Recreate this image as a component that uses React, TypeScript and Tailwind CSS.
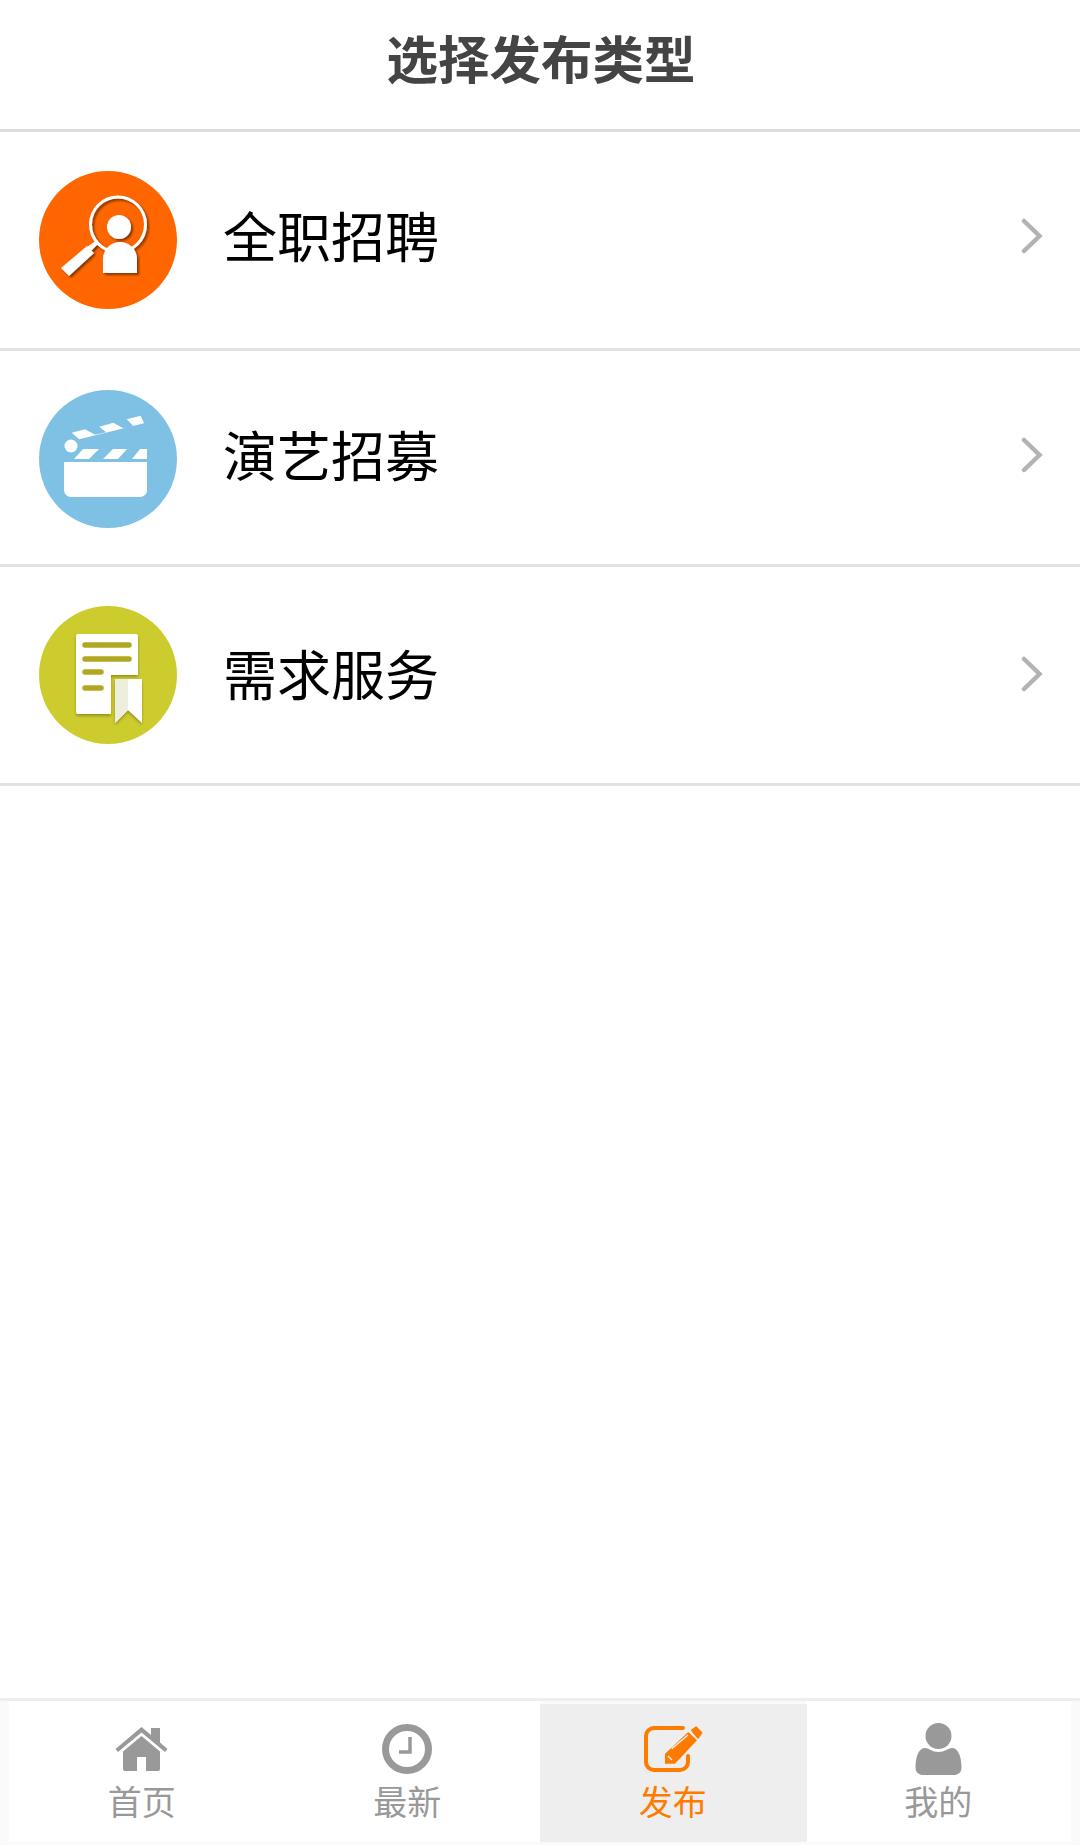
const rows = [
  { label: "全职招聘", icon: <SearchIcon />, rowClass: "h-[219px]", textClass: "pb-[11px]", arrowClass: "mb-[8px]" },
  { label: "演艺招募", icon: <ClapperIcon />, rowClass: "h-[216px]", textClass: "pb-[10px]", arrowClass: "mb-[8px]" },
  { label: "需求服务", icon: <DocIcon />, rowClass: "h-[219px]", textClass: "pb-[5px]", arrowClass: "mb-[2px]" },
];

const tabs = [
  { label: "首页", icon: <HomeIcon /> },
  { label: "最新", icon: <ClockIcon /> },
  { label: "发布", icon: <EditIcon />, active: true },
  { label: "我的", icon: <UserIcon /> },
];

function SearchIcon() {
  return (
    <svg viewBox="0 0 138 138" className="h-[138px] w-[138px]">
      <defs>
        <filter id="orangeShadow" x="-20%" y="-20%" width="140%" height="140%">
          <feDropShadow dx="2" dy="2" stdDeviation="1.200" floodColor="#7a3300" floodOpacity="0.9" />
        </filter>
      </defs>
      <circle cx="69" cy="69" r="69" fill="#ff6600" />
      <g filter="url(#orangeShadow)" fill="#fff">
        <circle cx="79" cy="53.500" r="27.500" fill="none" stroke="#fff" strokeWidth="3" />
        <circle cx="80" cy="56" r="12" />
        <path d="M22 97 48 75 55 82 30 105Z" />
        <path d="M48 76 58 69 60 72 52 80Z" />
        <path d="M64 102V88A17 17 0 0 1 98 88V102Z" />
      </g>
    </svg>
  );
}

function ClapperIcon() {
  return (
    <svg viewBox="0 0 138 138" className="h-[138px] w-[138px]">
      <circle cx="69" cy="69" r="69" fill="#7fc1e5" />
      <g fill="#fff">
        <path d="M25 72H108V100A7 7 0 0 1 101 107H32A7 7 0 0 1 25 100Z" />
        <path d="M35 69 44 59H60L50 69ZM64 69 74 59H88L79 69ZM93 69 101 59H108V69Z" />
        <circle cx="32" cy="56" r="6.500" />
        <path d="M32.700 42.700 46 39.300 56 44.700 67 42.300 60.300 36.700 74.300 32.700 84.300 38.300 94.300 36 87.700 29.300 101.700 25.700 105 33.300 40.300 49.300Z" />
      </g>
    </svg>
  );
}

function DocIcon() {
  return (
    <svg viewBox="0 0 138 138" className="h-[138px] w-[138px]">
      <defs>
        <filter id="oliveShadow" x="-20%" y="-20%" width="140%" height="140%">
          <feDropShadow dx="0" dy="2" stdDeviation="1.500" floodColor="#8f8a18" floodOpacity="0.9" />
        </filter>
      </defs>
      <circle cx="69" cy="69" r="69" fill="#cdcc2f" />
      <g filter="url(#oliveShadow)">
        <path d="M39 28H97A2 2 0 0 1 99 30V69H72V108H39A2 2 0 0 1 37 106V30A2 2 0 0 1 39 28Z" fill="#fff" />
        <path d="M76 73H103V117L89 104 76 117Z" fill="#fff" />
      </g>
      <path d="M76 73H89V104L76 117Z" fill="#eeeedd" />
      <g stroke="#b0a821" strokeWidth="5.500" strokeLinecap="round">
        <path d="M46 39H90M46 53H90M46 66H62M46 82H62" />
      </g>
    </svg>
  );
}

function HomeIcon() {
  return (
    <svg viewBox="0 0 53 44" className="h-[44px] w-[53px]" fill="#999">
      <path d="M26.500 0 36 8V1H45V15.500L52.500 22 50 25 26.500 5.500 3 25 .5 22Z" />
      <path d="M26.500 9 45 24.500V42A2 2 0 0 1 43 44H31V30H22V44H10A2 2 0 0 1 8 42V24.500Z" />
    </svg>
  );
}

function ClockIcon() {
  return (
    <svg viewBox="0 0 50 50" className="h-[50px] w-[50px]">
      <circle cx="25" cy="25" r="21.500" fill="none" stroke="#999" strokeWidth="7" />
      <path d="M28 13V28H17" fill="none" stroke="#999" strokeWidth="3.500" />
    </svg>
  );
}

function EditIcon() {
  return (
    <svg viewBox="0 0 60 48" className="h-[48px] w-[60px]">
      <path d="M40 3H11A8 8 0 0 0 3 11V37A8 8 0 0 0 11 45H37A8 8 0 0 0 45 37V31" fill="none" stroke="#ff7b00" strokeWidth="4" strokeLinecap="round" />
      <path d="M22 28.700 45.300 7 54 15.300 32 38.700H22Z" fill="#ff7b00" />
      <path d="M48.700 5.300 53 2 58.700 7.700 55 13Z" fill="#ff7b00" stroke="#ff7b00" strokeWidth="1.500" strokeLinejoin="round" />
      <path d="M28.700 23.700 45 10M25 31 29 35" fill="none" stroke="#eee" strokeWidth="1.500" />
    </svg>
  );
}

function UserIcon() {
  return (
    <svg viewBox="0 0 47 52" className="h-[52px] w-[47px]" fill="#999">
      <circle cx="23.500" cy="13" r="13" />
      <path d="M10 25C14 25 17 29 23.500 29S33 25 37 25C43 25 46.500 33 46.500 45A7 7 0 0 1 40 52H7A7 7 0 0 1 .5 45C.5 33 4 25 10 25Z" />
    </svg>
  );
}

export default function App() {
  return (
    <div className="flex h-[1845px] w-[1080px] flex-col bg-white font-['Noto_Sans_CJK_SC',sans-serif]">
      <header className="flex h-[132px] shrink-0 items-center justify-center border-b-[3px] border-[#ddd] pb-[16px] pl-[2px] text-[51.500px] font-bold text-[#444]">
        选择发布类型
      </header>

      <main className="flex-1">
        {rows.map((row) => (
          <div key={row.label} className={`border-b-[3px] border-[#e2e2e2] pt-[39px] pl-[39px] pr-[35px] ${row.rowClass}`}>
            <div className="flex h-[138px] items-center">
              <div className="shrink-0">{row.icon}</div>
              <span className={`ml-[46px] flex-1 text-[54px] leading-none text-black ${row.textClass}`}>{row.label}</span>
              <svg viewBox="0 0 24 36" className={`h-[36px] w-[24px] ${row.arrowClass}`}>
                <path d="M3 3 18.500 18 3 33" fill="none" stroke="#b3b3b3" strokeWidth="4.500" strokeLinecap="round" />
              </svg>
            </div>
          </div>
        ))}
      </main>

      <nav className="grid h-[147px] shrink-0 grid-cols-4 border-t-[3px] border-[#eee] bg-[#fafafa] px-[9px]">
        {tabs.map((tab) => (
          <div key={tab.label} className={`mb-[3px] flex flex-col items-center ${tab.active ? "relative z-10 mt-[3px] -mr-[1.500px] bg-[#eee] pt-[19px] pr-[1.500px] text-[#ff7b00]" : "bg-white pt-[22px] text-[#999]"}`}>
            <div className="flex h-[52px] items-center">{tab.icon}</div>
            <span className="mt-[2px] text-[34px] leading-[48px]">{tab.label}</span>
          </div>
        ))}
      </nav>
    </div>
  );
}
